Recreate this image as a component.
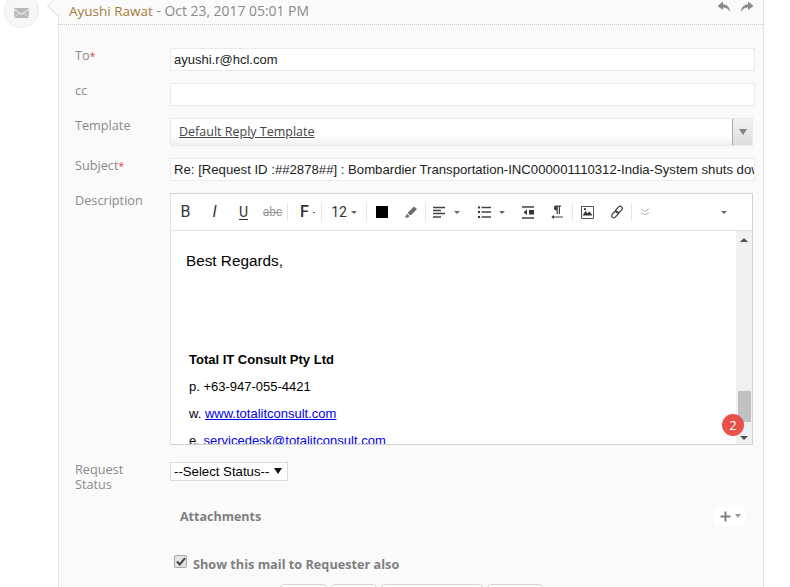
<div class="page">
    <div class="gutter">
        <div class="mail-circle">
            <svg viewBox="0 0 16 11" width="15" height="10">
                <path d="M0 0.8 L8 6.4 L16 0.8 V0 H0z" fill="#b9b9b9" />
                <path d="M0 2 V11 H16 V2 L8 7.8z" fill="#b9b9b9" />
                <path d="M0 10.5 L5.6 5.6 M16 10.5 L10.4 5.6" stroke="#f4f4f4" stroke-width="0.8" />
            </svg>
        </div>
    </div>

    <section class="panel">
        <span class="notch"></span>
        <header class="head">
            <div class="title"><span class="name">Ayushi Rawat</span> - Oct 23, 2017 05:01 PM</div>
            <div class="head-actions">
                <svg viewBox="0 0 14 12" width="14" height="12">
                    <path d="M6 0.5 L0.5 5 L6 9 V6.4 C9 6.4 11.5 7.6 13 11 C13 6.6 10.4 3.6 6 3.2z" fill="#8a8a8a" />
                </svg>
                <svg viewBox="0 0 14 12" width="14" height="12">
                    <path d="M8 0.5 L13.5 5 L8 9 V6.4 C5 6.4 2.5 7.6 1 11 C1 6.6 3.6 3.6 8 3.2z" fill="#8a8a8a" />
                </svg>
            </div>
        </header>

        <div class="form">
            <div class="label">To<span class="req">*</span></div>
            <div class="field text to">ayushi.r@hcl.com</div>

            <div class="label">cc</div>
            <div class="field text cc"></div>

            <div class="label">Template</div>
            <div class="field template">
                <a class="template-name" href="#top">Default Reply Template</a>
                <span class="template-arrow"><i class="caret"></i></span>
            </div>

            <div class="label">Subject<span class="req">*</span></div>
            <div class="field text subject">Re: [Request ID :##2878##] : Bombardier Transportation-INC000001110312-India-System shuts down when it is undocked</div>

            <div class="label">Description</div>
            <div class="editor">
                <div class="toolbar">
                    <button class="tool" aria-label="Bold"><span class="glyph b">B</span></button>
                    <button class="tool" aria-label="Italic"><span class="glyph i">I</span></button>
                    <button class="tool" aria-label="Underline"><span class="glyph u">U</span></button>
                    <button class="tool" aria-label="Strike"><span class="glyph s">abc</span></button>
                    <span class="sep"></span>
                    <button class="tool wide" aria-label="Font"><span class="glyph f">F</span><span class="dot"></span></button>
                    <span class="sep"></span>
                    <button class="tool size" aria-label="Size"><span class="glyph n">12</span><i class="caret small"></i></button>
                    <span class="sep"></span>
                    <button class="tool" aria-label="Text color"><span class="swatch"></span></button>
                    <button class="tool" aria-label="Background">
                        <svg viewBox="0 0 14 14" width="14" height="14"><path d="M10 1.5 L13 4 L6.5 10.5 L3.5 8z M3 9 L5.5 11 L4 12.5 H0.8z" fill="#6a6a6a" /></svg>
                    </button>
                    <span class="sep"></span>
                    <button class="tool menu first-menu" aria-label="Align">
                        <svg viewBox="0 0 13 13" width="13" height="13"><path d="M0 1.5H12M0 4.5H8M0 7.5H12M0 11H8" stroke="#444" stroke-width="1.3" /></svg>
                        <i class="caret small"></i>
                    </button>
                    <button class="tool menu" aria-label="List">
                        <svg viewBox="0 0 13 13" width="13" height="13"><path d="M3.5 1.5H13M3.5 6H13M3.5 11H13" stroke="#444" stroke-width="1.3" /><path d="M0 0.5H2V2.5H0zM0 5H2V7H0zM0 10H2V12H0z" fill="#333" /></svg>
                        <i class="caret small"></i>
                    </button>
                    <button class="tool" aria-label="Outdent">
                        <svg viewBox="0 0 13 13" width="13" height="13"><path d="M0 1H12M0 12H12" stroke="#444" stroke-width="1.3" /><path d="M7 4H12V8.5H7z" fill="#333" /><path d="M5 3.5V9L1.5 6.2z" fill="#333" /></svg>
                    </button>
                    <button class="tool" aria-label="Direction">
                        <svg viewBox="0 0 13 14" width="13" height="14"><path d="M3 0.5H10V1.8H9V9H7.8V1.8H6.8V9H5.6V5.4C3.8 5.4 2.8 4.2 2.8 3C2.8 1.8 3.4 0.9 4 0.5z" fill="#444" /><path d="M1 12H12" stroke="#444" stroke-width="1" /><path d="M3 10V14L0.4 12z" fill="#444" /></svg>
                    </button>
                    <span class="sep"></span>
                    <button class="tool" aria-label="Image">
                        <svg viewBox="0 0 13 13" width="13" height="13"><path d="M0.5 0.5H12.5V12.5H0.5z" fill="none" stroke="#555" /><path d="M1.5 9.5 L4.5 5 L6.5 7.5 L8.5 5.5 L11.5 9.5z" fill="#333" /><circle cx="4" cy="3.2" r="1.1" fill="#333" /></svg>
                    </button>
                    <button class="tool" aria-label="Link">
                        <svg viewBox="0 0 14 14" width="14" height="14"><g fill="none" stroke="#444" stroke-width="1.3"><rect x="7" y="0.8" width="4.2" height="7.5" rx="2.1" transform="rotate(45 9.1 4.5)" /><rect x="2.8" y="5.7" width="4.2" height="7.5" rx="2.1" transform="rotate(45 4.9 9.5)" /></g></svg>
                    </button>
                    <span class="sep"></span>
                    <button class="tool more" aria-label="More">
                        <svg viewBox="0 0 10 8" width="10" height="8"><path d="M1 1 L5 3.4 L9 1 M1 4.4 L5 6.8 L9 4.4" fill="none" stroke="#b5b5b5" stroke-width="1" /></svg>
                    </button>
                    <span class="spacer"></span>
                    <i class="caret small last"></i>
                </div>

                <div class="editor-body">
                    <div class="content">
                        <p class="regards">Best Regards,</p>
                        <p class="company">Total IT Consult Pty Ltd</p>
                        <p class="line">p. +63-947-055-4421</p>
                        <p class="line">w. <a href="#top">www.totalitconsult.com</a></p>
                        <p class="line">e. <a href="#top">servicedesk@totalitconsult.com</a></p>
                    </div>
                    <div class="scrollbar">
                        <i class="sb-up"></i>
                        <span class="sb-thumb"></span>
                        <i class="sb-down"></i>
                    </div>
                    <span class="badge">2</span>
                </div>
            </div>

            <div class="label status-label">Request Status</div>
            <div class="status-field">
                <div class="select-wrap">
                    <select class="status">
                        <option>--Select Status--</option>
                    </select>
                    <span class="select-arrow"></span>
                </div>
            </div>
        </div>

        <div class="attachments">
            <span>Attachments</span>
            <span class="add">
                <svg viewBox="0 0 11 11" width="11" height="11"><path d="M5.5 0.5V10.5M0.5 5.5H10.5" stroke="#808080" stroke-width="2" /></svg>
                <i class="caret small"></i>
            </span>
        </div>

        <label class="show-mail">
            <span class="check">
                <svg viewBox="0 0 10 9" width="10" height="9"><path d="M1 4.5 L3.8 7.5 L9 1.2" fill="none" stroke="#444" stroke-width="2" /></svg>
            </span>
            Show this mail to Requester also
        </label>

        <div class="actions">
            <button class="btn send" aria-label="Action 1"></button>
            <button class="btn save" aria-label="Action 2"></button>
            <button class="btn draft" aria-label="Action 3"></button>
            <button class="btn cancel" aria-label="Action 4"></button>
        </div>
    </section>
</div>

<style>
    :global(body) {
        background: #fff;
        overflow: hidden;
    }

    .page {
        height: 587px;
        overflow: hidden;
        display: flex;
        align-items: flex-start;
        font-family: "Open Sans", "Liberation Sans", sans-serif;
        position: relative;
    }

    .gutter {
        width: 58px;
        flex: none;
    }

    .mail-circle {
        position: absolute;
        left: 4px;
        top: -7px;
        width: 33px;
        height: 33px;
        border: 1px solid #ececec;
        border-radius: 50%;
        background: #f7f7f7;
        display: flex;
        align-items: center;
        justify-content: center;
    }

    .mail-circle svg {
        margin-top: 5px;
    }

    .panel {
        position: relative;
        width: 704px;
        min-height: 640px;
        background: #fafafa;
        border-left: 1px solid #e3e3e3;
        border-right: 1px solid #e3e3e3;
    }

    .notch {
        position: absolute;
        left: -9px;
        top: -1px;
        width: 13px;
        height: 13px;
        background: #fafafa;
        border-left: 1px solid #e3e3e3;
        border-bottom: 1px solid #e3e3e3;
        transform: rotate(45deg);
    }

    .head {
        height: 26px;
        box-sizing: border-box;
        border-bottom: 1px dotted #c9c9c9;
        display: flex;
        justify-content: space-between;
        padding: 1px 9px 0 10px;
        border-top: 1px solid #f0f0f0;
        margin-top: -1px;
    }

    .title {
        font-size: 13.9px;
        line-height: 19px;
        color: #8a8a8a;
        position: relative;
    }

    .name {
        font-size: 13.5px;
        color: #a67c3d;
    }

    .head-actions {
        display: flex;
        gap: 9px;
        height: 12px;
    }

    .form {
        display: grid;
        grid-template-columns: 95px 585px;
        padding: 23px 0 0 16px;
        row-gap: 12px;
    }

    .label {
        font-size: 12.7px;
        line-height: 14px;
        color: #8a8a8a;
    }

    .req {
        color: #e33;
        font-size: 10px;
    }

    .field {
        box-sizing: border-box;
        background: #fff;
        border: 1px solid #e6ebf2;
    }

    .text {
        height: 23px;
        padding: 0 3px;
        font-family: "Liberation Sans", Arial, sans-serif;
        font-size: 13px;
        line-height: 21px;
        color: #222;
        white-space: nowrap;
        overflow: hidden;
    }

    .subject {
        font-size: 13.17px;
    }

    .template {
        width: 583px;
        height: 28px;
        display: flex;
        justify-content: space-between;
        background: linear-gradient(#fff 65%, #f0f0f0);
    }

    .template-name {
        font-size: 12.5px;
        line-height: 26px;
        margin-left: 8px;
        color: #444;
        text-decoration: underline;
    }

    .template-arrow {
        width: 19px;
        border-left: 1px solid #a9a9a9;
        background: linear-gradient(#f2f2f2, #dcdcdc);
        display: flex;
        align-items: center;
        justify-content: center;
    }

    .caret {
        display: inline-block;
        width: 0;
        height: 0;
        border-left: 4px solid transparent;
        border-right: 4px solid transparent;
        border-top: 6px solid #808080;
    }

    .caret.small {
        border-left-width: 3px;
        border-right-width: 3px;
        border-top: 3px solid #666;
    }

    .editor {
        width: 583px;
        height: 252px;
        box-sizing: border-box;
        background: #fff;
        border: 1px solid #d2d2d2;
        border-left-color: #e2e2e2;
        display: flex;
        flex-direction: column;
    }

    .toolbar {
        height: 37px;
        flex: none;
        box-sizing: border-box;
        border-bottom: 1px solid #e2e2e2;
        display: flex;
        align-items: center;
    }

    .tool {
        all: unset;
        height: 18px;
        width: 29px;
        display: flex;
        align-items: center;
        justify-content: center;
        gap: 4px;
        color: #333;
        font-family: Roboto, "Liberation Sans", sans-serif;
    }

    .tool.wide {
        width: 33px;
        padding-left: 6px;
        box-sizing: border-box;
    }

    .tool.size {
        width: 44px;
    }

    .tool.menu {
        width: 44px;
        justify-content: flex-start;
        padding-left: 8px;
        box-sizing: border-box;
        gap: 8px;
    }

    .tool.first-menu {
        width: 44px;
        padding-left: 7px;
    }

    .tool.more {
        margin-left: -2px;
    }

    .glyph {
        font-size: 16px;
        line-height: 18px;
    }

    .f {
        font-weight: 500;
    }

    .i {
        font-style: italic;
    }

    .u {
        font-size: 14px;
        line-height: 14px;
        border-bottom: 1.5px solid #333;
    }

    .s {
        font-size: 12px;
        color: #999;
        text-decoration: line-through;
    }

    .n {
        font-size: 14px;
    }

    .dot {
        width: 2px;
        height: 1px;
        background: #666;
    }

    .swatch {
        width: 12px;
        height: 12px;
        background: #000;
    }

    .sep {
        width: 1px;
        height: 18px;
        background: #e4e4e4;
        flex: none;
    }

    .spacer {
        flex: 1;
    }

    .last {
        margin-right: 25px;
    }

    .editor-body {
        position: relative;
        flex: 1;
        min-height: 0;
        display: flex;
        overflow: hidden;
    }

    .content {
        flex: 1;
        padding: 0 0 0 15px;
        font-family: "Liberation Sans", Arial, sans-serif;
        color: #000;
        overflow: hidden;
    }

    .content p {
        margin: 0;
    }

    .regards {
        font-size: 15.3px;
        line-height: 20px;
        padding-top: 20px;
    }

    .content .company {
        font-size: 13px;
        font-weight: 700;
        line-height: 18px;
        margin: 80px 0 0 3px;
    }

    .content .line {
        font-size: 13px;
        line-height: 18px;
        margin: 9px 0 0 3px;
        white-space: nowrap;
    }

    .line a {
        color: #00e;
    }

    .scrollbar {
        width: 16px;
        flex: none;
        background: #f0f0f0;
        display: flex;
        flex-direction: column;
        align-items: center;
    }

    .sb-up, .sb-down {
        width: 0;
        height: 0;
        border-left: 4px solid transparent;
        border-right: 4px solid transparent;
    }

    .sb-up {
        border-bottom: 4px solid #505050;
        margin-top: 7px;
    }

    .sb-down {
        border-top: 4px solid #505050;
        margin-bottom: 4px;
    }

    .sb-thumb {
        width: 13px;
        height: 31px;
        background: #c1c1c1;
        margin-top: auto;
        margin-bottom: 14px;
    }

    .badge {
        position: absolute;
        right: 8px;
        bottom: 8px;
        width: 22px;
        height: 22px;
        border-radius: 50%;
        background: #e8504a;
        color: #fff;
        font-size: 13px;
        line-height: 22px;
        text-align: center;
    }

    .status-label {
        width: 70px;
        line-height: 15px;
        margin-top: 5px;
    }

    .status-field {
        padding-top: 5px;
    }

    .select-wrap {
        position: relative;
        width: 118px;
        height: 19px;
    }

    .status {
        appearance: none;
        display: block;
        width: 118px;
        height: 19px;
        box-sizing: border-box;
        padding: 0 0 0 3px;
        background: #fff;
        border: 1px solid #dcdcdc;
        border-radius: 0;
        font-family: "Liberation Sans", Arial, sans-serif;
        font-size: 13.2px;
        color: #000;
    }

    .select-arrow {
        position: absolute;
        left: 104px;
        top: 6px;
        width: 0;
        height: 0;
        border-left: 4px solid transparent;
        border-right: 4px solid transparent;
        border-top: 6px solid #111;
        pointer-events: none;
    }

    .attachments {
        margin: 15px 18px 0 121px;
        display: flex;
        justify-content: space-between;
        align-items: center;
        height: 18px;
        font-size: 12.5px;
        font-weight: 700;
        color: #7f7f7f;
    }

    .add {
        display: flex;
        align-items: center;
        gap: 4px;
        background: #fff;
        padding: 4px 4px 4px 6px;
        border-radius: 4px;
    }

    .add .caret {
        border-top-color: #999;
        border-left-width: 3.5px;
        border-right-width: 3.5px;
        border-top-width: 4px;
    }

    .show-mail {
        display: flex;
        align-items: center;
        gap: 6px;
        margin: 30px 0 0 115px;
        font-size: 12.7px;
        font-weight: 700;
        color: #7f7f7f;
    }

    .check {
        width: 11px;
        height: 11px;
        border: 1px solid #a8a8a8;
        border-radius: 2px;
        background: #e4e4e4;
        display: flex;
        align-items: center;
        justify-content: center;
        margin-top: -6px;
    }

    .actions {
        display: flex;
        gap: 4px;
        margin: 11px 0 0 221px;
    }

    .btn {
        all: unset;
        box-sizing: border-box;
        height: 26px;
        border: 1px solid #d5d5d5;
        border-radius: 4px;
        background: #fff;
    }

    .send { width: 47px; }
    .save { width: 46px; }
    .draft { width: 102px; }
    .cancel { width: 56px; }
</style>
